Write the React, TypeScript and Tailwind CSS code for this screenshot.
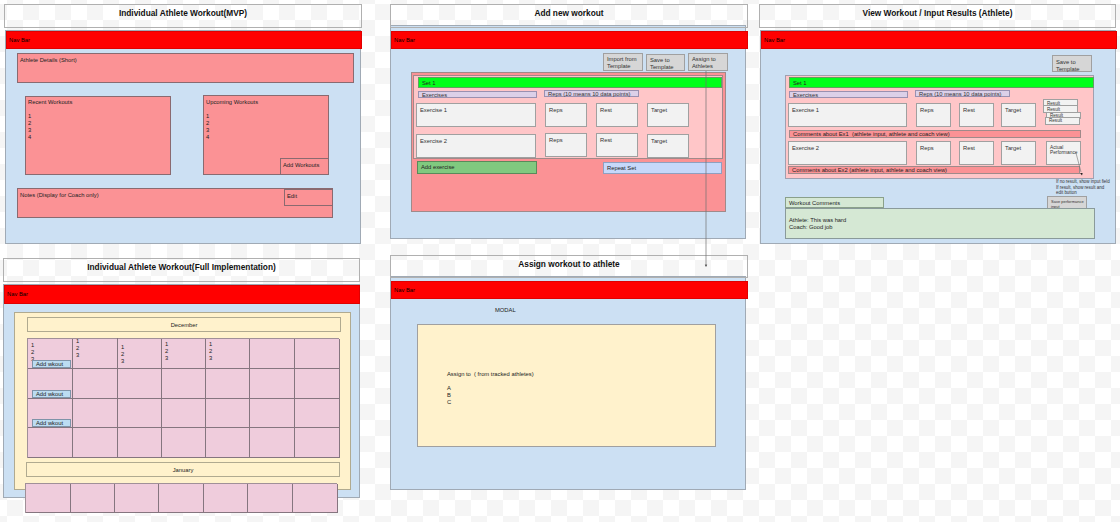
import type { ReactNode } from "react";

const text = "text-[5.8px] leading-[7px] text-[#222]";
const red = "box-border border border-[#8a6a70] bg-[#fb9295] pl-[2px] pt-[3px]";
const field = "box-border h-[24px] border border-[#a0a0a0] bg-[#f2f2f2] pl-[3px] pt-[3px] text-[#333]";
const gray = "box-border border border-[#a0a0a0] bg-[#d6d6d6] pl-[3px] pt-[2px] text-[#333]";
const lav = "box-border h-[7px] border border-[#9a90b0] bg-[#dcd0e8] pl-[3px] leading-[6px] text-[#333]";
const green = "box-border h-[11px] border border-[#60a060] bg-[#00ff1a] pl-[3px] pt-[2px]";
const sky = "box-border border border-[#a0aab5] bg-[#cce0f3]";
const result = "box-border w-[35px] border border-[#a0a0a0] bg-[#f2f2f2] pl-[3px] text-[4.6px] leading-[6px] text-[#333]";
const comment = "box-border h-[8px] w-[292px] border border-[#a08a8a] bg-[#fb9295] pl-[3px]";
const cream = "box-border h-[15px] border border-[#b0aa90] bg-[#fff2cc] pt-[4px] text-center";
const calendar = "grid border-t border-l border-[#a09098] bg-[#efccdc] [&>div]:border-r [&>div]:border-b [&>div]:border-[#85757f]";

function Lines({ items }: { items: string[] }) {
  return <>{items.map((t, i) => <div key={i}>{t}</div>)}</>;
}

function Title({ className = "", children }: { className?: string; children: ReactNode }) {
  return (
    <div className={`relative z-10 box-border h-[24px] border border-[#b0b0b0] pt-[3px] text-center text-[8.3px] leading-[11px] font-bold text-[#111] ${className}`}>
      {children}
    </div>
  );
}

function Nav({ className = "" }: { className?: string }) {
  return (
    <div className={`box-border h-[18px] w-[356px] border border-[#c00000]/50 bg-[#ff0000] pl-[2px] pt-[5px] text-black ${className}`}>
      Nav Bar
    </div>
  );
}

function Wkout() {
  return (
    <div className="absolute right-[1px] bottom-0 box-border h-[8px] w-[39px] border border-[#7f93a8] bg-[#bcdcf2] pl-[3px] leading-[6px]">
      Add wkout
    </div>
  );
}

function HeaderRow() {
  return (
    <div className="mt-[3px] flex items-start gap-[7px]">
      <div className={`w-[119px] ${lav}`}>Exercises</div>
      <div className={`-mt-[1px] w-[95px] ${lav}`}>Reps (10 means 10 data points)</div>
    </div>
  );
}

export default function App() {
  const numbers = ["1", "2", "3"];
  return (
    <div className={`relative h-[522px] w-[1120px] overflow-hidden bg-white bg-[conic-gradient(#f5f5f5_25%,#ffffff_0_50%,#f5f5f5_0_75%,#ffffff_0)] bg-[length:32px_32px] bg-[position:7px_4px] whitespace-nowrap font-['Liberation_Sans','Arial',sans-serif] ${text}`}>
      {/* Individual Athlete Workout (MVP) */}
      <section className="absolute left-[4px] top-[4px] flex w-[358px] flex-col">
        <Title>Individual Athlete Workout(MVP)</Title>
        <div className={`ml-[1px] mt-[2px] h-[214px] w-[356px] ${sky}`}>
          <Nav />
          <div className="flex flex-col pl-[11px]">
            <div className={`mt-[4px] h-[30px] w-[337px] ${red}`}>Athlete Details (Short)</div>
            <div className="mt-[12px] flex items-start pl-[8px]">
              <div className={`mt-[1px] h-[79px] w-[146px] ${red} !pt-[2px]`}>
                <Lines items={["Recent Workouts", "\u00a0", "1", "2", "3", "4"]} />
              </div>
              <div className={`relative ml-[32px] h-[80px] w-[126px] ${red} !pt-[3px]`}>
                <Lines items={["Upcoming Workouts", "\u00a0", "1", "2", "3", "4"]} />
                <div className={`absolute -right-[1px] -bottom-[1px] h-[17px] w-[49px] ${red}`}>Add Workouts</div>
              </div>
            </div>
            <div className={`relative mt-[13px] h-[30px] w-[316px] ${red}`}>
              Notes (Display for Coach only)
              <div className={`absolute -right-[1px] top-0 h-[17px] w-[49px] ${red}`}>Edit</div>
            </div>
          </div>
        </div>
      </section>

      {/* Add new workout */}
      <section className="absolute left-[390px] top-[4px] flex w-[358px] flex-col">
        <Title>Add new workout</Title>
        <div className={`-mt-[3px] h-[214px] w-[356px] ${sky}`}>
          <div className="h-[5px]" />
          <Nav className="w-[357px]" />
          <div className="mt-[4px] flex items-start gap-[3px] pl-[212px]">
            <div className={`h-[18px] w-[40px] whitespace-normal ${gray}`}>Import from Template</div>
            <div className={`mt-[1px] h-[17px] w-[39px] whitespace-normal ${gray}`}>Save to Template</div>
            <div className={`h-[18px] w-[40px] whitespace-normal ${gray}`}>Assign to Athletes</div>
          </div>
          <div className="ml-[20px] mt-[1px] box-border h-[140px] w-[315px] border border-[#a08a8a] bg-[#fb9295]">
            <div className="ml-[1px] mt-[2px] box-border h-[84px] w-[310px] border border-[#a08a8a] bg-[#ffc6c8] pl-[2px]">
              <div className={`ml-[2px] mt-[1px] w-[304px] ${green}`}>Set 1</div>
              <div className="pl-[2px]"><HeaderRow /></div>
              <div className="mt-[5px] flex items-start gap-[9px]">
                <div className={`w-[120px] ${field}`}>Exercise 1</div>
                <div className={`w-[42px] ${field}`}>Reps</div>
                <div className={`w-[42px] ${field}`}>Rest</div>
                <div className={`w-[42px] ${field}`}>Target</div>
              </div>
              <div className="mt-[6px] flex items-start gap-[9px]">
                <div className={`mt-[1px] w-[120px] ${field}`}>Exercise 2</div>
                <div className={`w-[42px] ${field}`}>Reps</div>
                <div className={`w-[42px] ${field}`}>Rest</div>
                <div className={`mt-[1px] w-[42px] ${field}`}>Target</div>
              </div>
            </div>
            <div className="mt-[2px] flex items-start pl-[5px]">
              <div className="box-border h-[13px] w-[120px] border border-[#5a8a5a] bg-[#80c97f] pl-[3px] pt-[2px]">Add exercise</div>
              <div className="ml-[66px] mt-[1px] box-border h-[12px] w-[119px] border border-[#8f9fc0] bg-[#c6d8fa] pl-[3px] pt-[2px]">Repeat Set</div>
            </div>
          </div>
        </div>
      </section>

      {/* View Workout / Input Results */}
      <section className="absolute left-[759px] top-[4px] flex w-[357px] flex-col">
        <Title>View Workout / Input Results (Athlete)</Title>
        <div className={`ml-[1px] mt-[2px] h-[214px] w-[356px] ${sky}`}>
          <Nav />
          <div className="mt-[6px] flex justify-end pr-[23px]">
            <div className={`h-[17px] w-[40px] whitespace-normal ${gray} !pt-[3px]`}>Save to Template</div>
          </div>
          <div className="relative ml-[24px] mt-[3px] box-border h-[104px] w-[309px] border border-[#a0a0b0] bg-[#ffc6c8] pl-[2px]">
            <div className={`ml-[1px] mt-[1px] w-[305px] ${green}`}>Set 1</div>
            <div className="pl-[1px]"><HeaderRow /></div>
            <div className="mt-[5px] flex items-start gap-[8px]">
              <div className={`w-[119px] ${field} mr-[1px]`}>Exercise 1</div>
              <div className={`w-[35px] ${field}`}>Reps</div>
              <div className={`w-[35px] ${field}`}>Rest</div>
              <div className={`-ml-[1px] w-[35px] ${field}`}>Target</div>
              <div className="-ml-[1px] -mt-[4px] flex flex-col">
                <div className={`h-[8px] pt-[1px] ${result}`}>Result</div>
                <div className={`-mt-[2px] h-[8px] pt-[1px] ${result}`}>Result</div>
                <div className={`-mt-[1px] ml-[3px] h-[7px] ${result}`}>Result</div>
                <div className={`-mt-[2px] ml-[2px] h-[8px] ${result}`}>Result</div>
              </div>
            </div>
            <div className={`ml-[1px] mt-[3px] ${comment}`}>Comments about Ex1&nbsp; (athlete input, athlete and coach view)</div>
            <div className="mt-[3px] flex items-start gap-[8px]">
              <div className={`w-[119px] ${field} mr-[1px]`}>Exercise 2</div>
              <div className={`w-[35px] ${field}`}>Reps</div>
              <div className={`w-[35px] ${field}`}>Rest</div>
              <div className={`-ml-[1px] w-[35px] ${field}`}>Target</div>
              <div className={`ml-[2px] w-[35px] whitespace-normal ${field} !text-[4.8px] !leading-[5px]`}>Actual Performance</div>
            </div>
            <div className={`mt-[1px] ${comment}`}>Comments about Ex2 (athlete input, athlete and coach view)</div>
            <div className="absolute left-[270px] top-[103px] z-10 text-[4.45px] leading-[5.5px] text-[#333]">
              <Lines items={["If no result, show input field", "If result, show result and", "edit button"]} />
            </div>
          </div>
          <div className="ml-[24px] mt-[17px] flex items-start">
            <div className="mt-[1px] box-border h-[11px] w-[99px] border border-[#8aa08a] bg-[#d5e8d4] pl-[3px] pt-[2px]">Workout Comments</div>
            <div className="ml-[163px] box-border h-[13px] w-[40px] overflow-hidden whitespace-normal border border-[#a0a0a0] bg-[#d6d6d6] pl-[3px] pt-[2px] text-[4px] leading-[5px] text-[#333]">Save performance input</div>
          </div>
          <div className="relative z-10 -mt-[1px] ml-[24px] box-border h-[31px] w-[310px] border border-[#8a9a9a] bg-[#d5e8d4] pl-[3px] pt-[8px]">
            <Lines items={["Athlete: This was hard", "Coach: Good job"]} />
          </div>
        </div>
      </section>

      {/* Individual Athlete Workout (Full Implementation) */}
      <section className="absolute left-[3px] top-[258px] flex w-[357px] flex-col">
        <Title>Individual Athlete Workout(Full Implementation)</Title>
        <div className={`mt-[2px] h-[214px] w-[357px] ${sky}`}>
          <Nav className="h-[19px]" />
          <div className="ml-[10px] mt-[8px] box-border h-[178px] w-[337px] border border-[#b0aa90] bg-[#fff2cc] pl-[12px] pt-[4px]">
            <div className={`w-[314px] ${cream}`}>December</div>
            <div className={`mt-[6px] h-[120px] w-[312px] grid-cols-[45px_45px_44px_44px_44px_45px_45px] grid-rows-4 ${calendar}`}>
              <div className="relative pl-[3px] pt-[3px]"><Lines items={numbers} /><Wkout /></div>
              <div className="pl-[3px] -mt-[1px]"><Lines items={numbers} /></div>
              <div className="pl-[3px] pt-[5px]"><Lines items={numbers} /></div>
              <div className="pl-[3px] pt-[2px]"><Lines items={numbers} /></div>
              <div className="pl-[3px] pt-[2px]"><Lines items={numbers} /></div>
              <div />
              <div />
              <div className="relative"><Wkout /></div>
              {Array.from({ length: 6 }, (_, i) => <div key={i} />)}
              <div className="relative"><Wkout /></div>
              {Array.from({ length: 13 }, (_, i) => <div key={i} />)}
            </div>
            <div className={`-ml-[1px] mt-[4px] w-[314px] ${cream}`}>January</div>
            <div className={`-ml-[2px] mt-[6px] h-[30px] w-[312px] grid-cols-[45px_44px_44px_45px_44px_45px_45px] ${calendar}`}>
              {Array.from({ length: 7 }, (_, i) => <div key={i} />)}
            </div>
          </div>
        </div>
      </section>

      {/* Assign workout to athlete */}
      <section className="absolute left-[390px] top-[255px] flex w-[358px] flex-col">
        <Title className="!h-[23px]">Assign workout to athlete</Title>
        <div className={`-mt-[2px] h-[214px] w-[356px] ${sky}`}>
          <div className="h-[4px]" />
          <Nav className="w-[357px]" />
          <div className="pl-[104px] pt-[8px]">MODAL</div>
          <div className="ml-[26px] mt-[10px] box-border h-[123px] w-[299px] border border-[#a0a0a0] bg-[#fff2cc] pl-[29px] pt-[46px]">
            <Lines items={["Assign to\u00a0 ( from tracked athletes)", "\u00a0", "A", "B", "C"]} />
          </div>
        </div>
      </section>

      {/* Connectors */}
      <svg className="absolute left-0 top-0 z-20" width="1120" height="522" fill="none">
        <path d="M706 71V264" stroke="#707070" strokeWidth="0.7" />
        <path d="M704.8 264.5h2.4l-1.2 2.4z" fill="#333" />
        <path d="M1076 153L1081 172" stroke="#707070" strokeWidth="0.6" />
        <path d="M1080 173h2.6l-0.6 2.6z" fill="#222" />
      </svg>
    </div>
  );
}
